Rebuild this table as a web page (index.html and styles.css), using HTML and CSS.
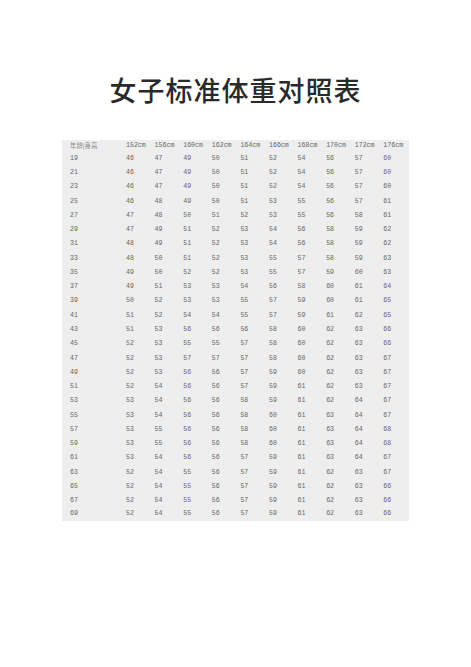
FILE: index.html
```html
<!DOCTYPE html>
<html lang="zh">
<head>
<meta charset="utf-8">
<title>女子标准体重对照表</title>
<link rel="stylesheet" href="styles.css">
</head>
<body>
<div class="page">
  <h1 class="title">女子标准体重对照表</h1>
  <div class="table">
    <div class="row head"><span class="age">年龄|身高</span><span>152cm</span><span>156cm</span><span>160cm</span><span>162cm</span><span>164cm</span><span>166cm</span><span>168cm</span><span>170cm</span><span>172cm</span><span>176cm</span></div>
    <div class="row"><span class="age">19</span><span>46</span><span>47</span><span>49</span><span>50</span><span>51</span><span>52</span><span>54</span><span>56</span><span>57</span><span>60</span></div>
    <div class="row"><span class="age">21</span><span>46</span><span>47</span><span>49</span><span>50</span><span>51</span><span>52</span><span>54</span><span>56</span><span>57</span><span>60</span></div>
    <div class="row"><span class="age">23</span><span>46</span><span>47</span><span>49</span><span>50</span><span>51</span><span>52</span><span>54</span><span>56</span><span>57</span><span>60</span></div>
    <div class="row"><span class="age">25</span><span>46</span><span>48</span><span>49</span><span>50</span><span>51</span><span>53</span><span>55</span><span>56</span><span>57</span><span>61</span></div>
    <div class="row"><span class="age">27</span><span>47</span><span>48</span><span>50</span><span>51</span><span>52</span><span>53</span><span>55</span><span>56</span><span>58</span><span>61</span></div>
    <div class="row"><span class="age">29</span><span>47</span><span>49</span><span>51</span><span>52</span><span>53</span><span>54</span><span>56</span><span>58</span><span>59</span><span>62</span></div>
    <div class="row"><span class="age">31</span><span>48</span><span>49</span><span>51</span><span>52</span><span>53</span><span>54</span><span>56</span><span>58</span><span>59</span><span>62</span></div>
    <div class="row"><span class="age">33</span><span>48</span><span>50</span><span>51</span><span>52</span><span>53</span><span>55</span><span>57</span><span>58</span><span>59</span><span>63</span></div>
    <div class="row"><span class="age">35</span><span>49</span><span>50</span><span>52</span><span>52</span><span>53</span><span>55</span><span>57</span><span>59</span><span>60</span><span>63</span></div>
    <div class="row"><span class="age">37</span><span>49</span><span>51</span><span>53</span><span>53</span><span>54</span><span>56</span><span>58</span><span>60</span><span>61</span><span>64</span></div>
    <div class="row"><span class="age">39</span><span>50</span><span>52</span><span>53</span><span>53</span><span>55</span><span>57</span><span>59</span><span>60</span><span>61</span><span>65</span></div>
    <div class="row"><span class="age">41</span><span>51</span><span>52</span><span>54</span><span>54</span><span>55</span><span>57</span><span>59</span><span>61</span><span>62</span><span>65</span></div>
    <div class="row"><span class="age">43</span><span>51</span><span>53</span><span>56</span><span>56</span><span>56</span><span>58</span><span>60</span><span>62</span><span>63</span><span>66</span></div>
    <div class="row"><span class="age">45</span><span>52</span><span>53</span><span>55</span><span>55</span><span>57</span><span>58</span><span>60</span><span>62</span><span>63</span><span>66</span></div>
    <div class="row"><span class="age">47</span><span>52</span><span>53</span><span>57</span><span>57</span><span>57</span><span>58</span><span>60</span><span>62</span><span>63</span><span>67</span></div>
    <div class="row"><span class="age">49</span><span>52</span><span>53</span><span>56</span><span>56</span><span>57</span><span>59</span><span>60</span><span>62</span><span>63</span><span>67</span></div>
    <div class="row"><span class="age">51</span><span>52</span><span>54</span><span>56</span><span>56</span><span>57</span><span>59</span><span>61</span><span>62</span><span>63</span><span>67</span></div>
    <div class="row"><span class="age">53</span><span>53</span><span>54</span><span>56</span><span>56</span><span>58</span><span>59</span><span>61</span><span>62</span><span>64</span><span>67</span></div>
    <div class="row"><span class="age">55</span><span>53</span><span>54</span><span>56</span><span>56</span><span>58</span><span>60</span><span>61</span><span>63</span><span>64</span><span>67</span></div>
    <div class="row"><span class="age">57</span><span>53</span><span>55</span><span>56</span><span>56</span><span>58</span><span>60</span><span>61</span><span>63</span><span>64</span><span>68</span></div>
    <div class="row"><span class="age">59</span><span>53</span><span>55</span><span>56</span><span>56</span><span>58</span><span>60</span><span>61</span><span>63</span><span>64</span><span>68</span></div>
    <div class="row"><span class="age">61</span><span>53</span><span>54</span><span>56</span><span>56</span><span>57</span><span>59</span><span>61</span><span>63</span><span>64</span><span>67</span></div>
    <div class="row"><span class="age">63</span><span>52</span><span>54</span><span>55</span><span>56</span><span>57</span><span>59</span><span>61</span><span>62</span><span>63</span><span>67</span></div>
    <div class="row"><span class="age">65</span><span>52</span><span>54</span><span>55</span><span>56</span><span>57</span><span>59</span><span>61</span><span>62</span><span>63</span><span>66</span></div>
    <div class="row"><span class="age">67</span><span>52</span><span>54</span><span>55</span><span>56</span><span>57</span><span>59</span><span>61</span><span>62</span><span>63</span><span>66</span></div>
    <div class="row"><span class="age">69</span><span>52</span><span>54</span><span>55</span><span>56</span><span>57</span><span>59</span><span>61</span><span>62</span><span>63</span><span>66</span></div>
  </div>
</div>
</body>
</html>
```

FILE: styles.css
```css
html, body {
  margin: 0;
  padding: 0;
  background: #ffffff;
}

.page {
  width: 471px;
  height: 667px;
  display: flex;
  flex-direction: column;
  align-items: center;
}

.title {
  margin: 76px 0 0 0;
  font-family: "Noto Sans CJK SC", "Noto Sans", sans-serif;
  font-size: 27px;
  line-height: 28px;
  font-weight: 500;
  color: #2a2a2a;
  letter-spacing: 1px;
}

.table {
  margin: 36px 0 0 0;
  width: 347px;
  background: #eeeeee;
  display: flex;
  flex-direction: column;
}

.row {
  display: grid;
  grid-template-columns: 64px repeat(10, 28.6px);
  height: 14.28px;
  align-items: center;
  font-family: "Liberation Mono", "DejaVu Sans Mono", monospace;
  font-size: 6.6px;
  color: #666666;
}

.row.head {
  height: 12px;
}

.row:last-child {
  height: 12px;
}

.row span {
  white-space: nowrap;
  line-height: 1;
}

.row .age {
  padding-left: 8px;
}

.head .age {
  font-family: "Noto Sans CJK SC", sans-serif;
  font-size: 6.4px;
  color: #8a8a8a;
}
```
